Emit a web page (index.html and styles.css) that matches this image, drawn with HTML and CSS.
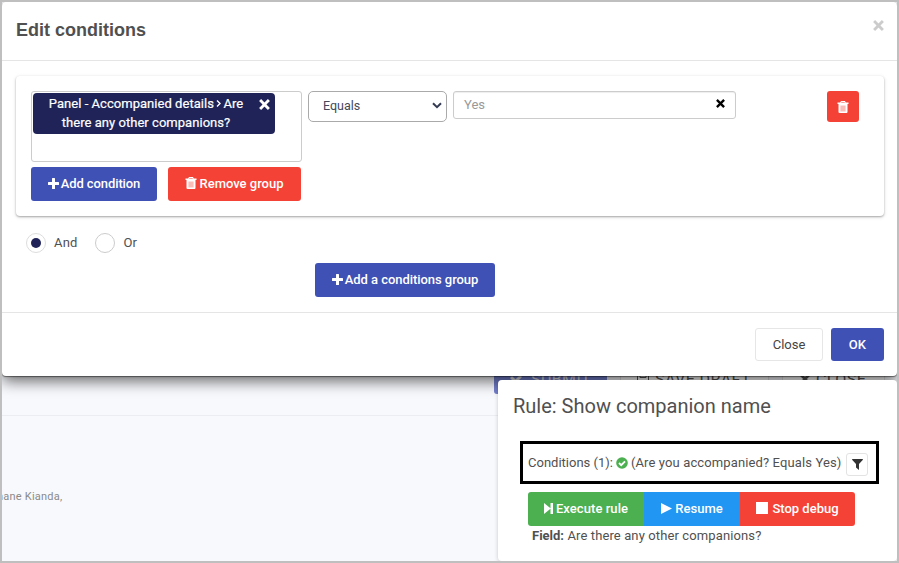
FILE: index.html
```
<!DOCTYPE html>
<html lang="en">
<head>
<meta charset="utf-8">
<title>Edit conditions</title>
<link rel="stylesheet" href="styles.css">
</head>
<body>
<svg class="defs" width="0" height="0">
  <symbol id="trash" viewBox="0 0 12 12"><path fill="currentColor" fill-opacity=".65" d="M2 3h8v8H2z"/><path fill="currentColor" fill-rule="evenodd" d="M4 0h4l.8 1.500H11.500V3H.5V1.500h2.700zM4.400.9 4.100 1.500h3.800L7.600.9zM1.500 3h9V11q0 1-1 1h-7q-1 0-1-1zM3.400 4.500v6h5.200v-6z"/></symbol>
  <symbol id="plus" viewBox="0 0 11 11"><path fill="currentColor" d="M4.600 0h1.800q.6 0 .6.6V4h3.400q.6 0 .6.6v1.800q0 .6-.6.6H7v3.400q0 .6-.6.6H4.600q-.6 0-.6-.6V7H.6Q0 7 0 6.400V4.600Q0 4 .6 4H4V.6q0-.6.6-.6z"/></symbol>
  <symbol id="cross" viewBox="0 0 10 10"><path d="M1 1 9 9M9 1 1 9" stroke="currentColor" stroke-width="2.600"/></symbol>
</svg>
<div class="frame">
  <main class="page">
    <div class="toolbar">
      <div class="tool tool-submit"><svg width="12" height="10" viewBox="0 0 12 10"><path fill="none" stroke="currentColor" stroke-width="3" d="M1 3 5.500 7.500 11 2"/></svg>SUBMIT</div>
      <div class="tool tool-draft"><svg width="12" height="12" viewBox="0 0 12 12"><path fill="none" stroke="currentColor" d="M.5.5h11v11H.5zM3 .5v4h6v-4M3 11V7.500h6V11"/></svg>SAVE DRAFT</div>
      <div class="tool tool-close"><svg width="10" height="10"><use href="#cross"/></svg>CLOSE</div>
    </div>
    <p class="names"><span>hane Kianda,</span></p>
  </main>

  <aside class="rule">
    <h2>Rule: Show companion name</h2>
    <div class="rule-cond">
      <span class="cond-label">Conditions (1):</span>
      <svg class="ok-icon" width="12" height="12" viewBox="0 0 12 12"><circle cx="6" cy="6" r="5.800" fill="#4caf50"/><path d="M3 6 5.200 8.200 9 4.300" fill="none" stroke="#fff" stroke-width="1.800"/></svg>
      <span class="cond-text">(Are you accompanied? Equals Yes)</span>
      <button class="filter"><svg width="11" height="11" viewBox="0 0 11 11"><path fill="#333" d="M.3 0h10.400q.4.500 0 1L7 5v6L4 8.500V5L.3 1q-.4-.5 0-1z"/></svg></button>
    </div>
    <div class="debug">
      <button class="btn exec"><svg width="9" height="11" viewBox="0 0 9 11"><path fill="currentColor" d="M0 0 6.500 5.200V0H9v11H6.500V5.800L0 11z"/></svg><span>Execute rule</span></button>
      <button class="btn resume"><svg width="11" height="11" viewBox="0 0 11 11"><path fill="currentColor" d="M0 0 11 5.500 0 11z"/></svg><span>Resume</span></button>
      <button class="btn stop"><i class="square"></i><span>Stop debug</span></button>
    </div>
    <p class="field"><b>Field:</b> <span>Are there any other companions?</span></p>
  </aside>

  <section class="modal">
    <header class="modal-head"><h1>Edit conditions</h1><button class="x"><svg width="11" height="11" viewBox="0 0 10 10"><use href="#cross"/></svg></button></header>
    <div class="modal-body">
      <div class="group">
        <div class="row">
          <div class="multi"><div class="tag"><span class="tag-text">Panel - Accompanied details <svg class="chevron" width="5" height="7" viewBox="0 0 5 7"><path d="M1 .5 4 3.500 1 6.500" fill="none" stroke="#fff" stroke-width="1.400"/></svg> Are<br>there any other companions?</span><svg width="11" height="11" viewBox="0 0 10 10"><use href="#cross"/></svg></div></div>
          <div class="select"><span>Equals</span><svg width="10" height="7" viewBox="0 0 10 7"><path d="M1 1.200 5 5.200 9 1.200" fill="none" stroke="#343a52" stroke-width="2"/></svg></div>
          <div class="input"><span>Yes</span><svg width="9" height="9" viewBox="0 0 10 10"><use href="#cross"/></svg></div>
          <button class="btn del"><svg width="12" height="12"><use href="#trash"/></svg></button>
        </div>
        <div class="actions">
          <button class="btn add"><svg width="11" height="11"><use href="#plus"/></svg><span>Add condition</span></button>
          <button class="btn remove"><svg width="12" height="12"><use href="#trash"/></svg><span>Remove group</span></button>
        </div>
      </div>
      <div class="radios">
        <label><i class="radio on"></i><span>And</span></label>
        <label><i class="radio"></i><span>Or</span></label>
      </div>
      <button class="btn add-group"><svg width="11" height="11"><use href="#plus"/></svg><span>Add a conditions group</span></button>
    </div>
    <footer class="modal-foot"><button class="btn close">Close</button><button class="btn ok">OK</button></footer>
  </section>
</div>
</body>
</html>
```
FILE: styles.css
```
* { box-sizing: border-box; }
body { margin: 0; font: 13px/19px Roboto, "Liberation Sans", sans-serif; color: #505050; }
.defs { position: absolute; }
svg { display: block; flex: none; }
h1, h2, p { margin: 0; }
button { font: inherit; margin: 0; padding: 0; border: 0; background: none; color: inherit; }
span, b { white-space: nowrap; }

.frame { position: relative; width: 899px; height: 563px; border: 2px solid #bfbfbf; overflow: hidden; background: #bfbfbf; }
.page { height: 559px; background: #f8f9fd; padding-top: 358px; }
.toolbar { height: 56px; display: flex; gap: 13px; padding-left: 492px; border-bottom: 1px solid #ebedf2; }
.tool { height: 34px; display: flex; align-items: center; gap: 9px; padding-top: 4px; font-size: 16px; letter-spacing: .4px; background: #fff; border: 1px solid #e4e4e4; color: #555; white-space: nowrap; }
.tool-submit { width: 113px; padding-left: 16px; background: #7480cf; border: 0; border-radius: 3px; color: #e4e4e4; }
.tool-draft { width: 149px; padding-left: 16px; gap: 6px; }
.tool-close { width: 103px; padding-left: 17px; gap: 6px; }
.names { padding-top: 71px; font-size: 11px; color: #8a8a8a; }
.names span { display: block; margin-left: -5px; letter-spacing: .22px; }

.modal { position: absolute; left: 0; top: 0; width: 895px; height: 374px; background: #fff; border-radius: 4px; box-shadow: 0 1px 1px rgba(0,0,0,.45), 0 5px 15px rgba(0,0,0,.6); z-index: 2; }
.modal-head { height: 59px; display: flex; justify-content: space-between; padding: 17px 13px 0; padding-left: 14px; border-bottom: 1px solid #e5e5e5; }
h1 { font: bold 18px/22px "Liberation Sans", sans-serif; color: #505050; }
.x { height: 11px; margin-top: 1px; color: #ccc; }
.modal-body { height: 251px; padding: 15px 13px 0 14px; display: flex; flex-direction: column; align-items: flex-start; }
.group { width: 868px; height: 140px; padding: 15px; border-radius: 4px; box-shadow: 0 1px 2px rgba(0,0,0,.28), 0 1px 4px rgba(0,0,0,.12); }
.row { display: flex; align-items: flex-start; height: 76px; gap: 6px; }
.multi { width: 271px; height: 71px; border: 1px solid #ccc; border-radius: 3px; padding: 1px; }
.tag { width: 242px; height: 41px; display: flex; background: #1f2357; border-radius: 4px; color: #fff; padding: 1px 5px 0 15px; justify-content: space-between; -webkit-text-stroke: .2px #fff; }
.tag-text { text-align: center; width: 196px; letter-spacing: .04px; }
.tag svg { margin-top: 5px; }
.tag .chevron { display: inline-block; margin: 0 -1px; vertical-align: 1px; }
.select { width: 139px; height: 31px; border: 1px solid #aaa; border-radius: 5px; display: flex; align-items: center; justify-content: space-between; padding: 0 4px 2px 14px; color: #44485a; }
.select span { font-size: 12.500px; }
.input { width: 283px; height: 28px; border: 1px solid #ccc; border-radius: 3px; display: flex; justify-content: space-between; padding: 3px 10px 0 10px; color: #999; box-shadow: inset 0 1px 1px rgba(0,0,0,.07); }
.input svg { margin-top: 4px; color: #000; }
.btn { display: flex; align-items: center; justify-content: center; gap: 2px; height: 34px; padding-bottom: 2px; border-radius: 3px; color: #fff; font-weight: 500; }
.del { width: 32px; height: 31px; margin-left: 85px; padding-bottom: 0; background: #f44336; }
.actions { display: flex; gap: 11px; }
.add { width: 126px; background: #3f51b5; }
.remove { width: 133px; background: #f44336; }
.add span { letter-spacing: -.1px; }
.radios { display: flex; margin: 17px 0 0 10px; gap: 18px; height: 20px; }
.radios label { display: flex; align-items: center; gap: 8px; }
.radios span { margin-top: -2px; letter-spacing: .15px; }
.radio { width: 20px; height: 20px; border: 1px solid #ccc; border-radius: 50%; display: flex; align-items: center; justify-content: center; }
.radio.on { border-color: #ddd; }
.radio.on::after { content: ""; width: 10px; height: 10px; border-radius: 50%; background: #1f2357; }
.add-group { width: 180px; margin: 10px 0 0 299px; background: #3f51b5; }
.add-group span { letter-spacing: -.05px; }
.modal-foot { border-top: 1px solid #e5e5e5; height: 64px; display: flex; justify-content: flex-end; gap: 8px; padding: 15px 13px; }
.close { width: 68px; height: 33px; padding: 0; border: 1px solid #e6e6e6; color: #444; font-weight: 400; }
.ok { width: 53px; height: 33px; padding: 0; background: #3f51b5; letter-spacing: .2px; }

.rule { position: absolute; left: 496px; top: 378px; width: 399px; height: 181px; background: #fff; border-radius: 4px; box-shadow: 0 1px 4px rgba(0,0,0,.2); z-index: 3; }
h2 { font: 400 20px/26px Roboto, sans-serif; padding: 13px 0 0 15px; white-space: nowrap; color: #505050; }
.rule-cond { width: 359px; height: 43px; margin: 22px 0 8px 22px; border: 3px solid #000; display: flex; align-items: center; padding-left: 5px; }
.cond-text { letter-spacing: .12px; }
.ok-icon { margin: 0 3px 0 3px; }
.filter { width: 22px; height: 23px; border: 1px solid #e3e3e3; border-radius: 3px; display: flex; align-items: center; justify-content: center; margin: 3px 0 0 5px; }
.debug { display: flex; margin-left: 30px; }
.exec { width: 116px; background: #4caf50; border-radius: 3px 0 0 3px; gap: 3px; }
.resume { width: 96px; background: #2196f3; border-radius: 0; gap: 3px; }
.stop { width: 115px; background: #f44336; border-radius: 0 3px 3px 0; gap: 4px; }
.exec span { letter-spacing: .06px; }
.square { width: 12px; height: 12px; background: #fff; }
.field { padding-left: 34px; letter-spacing: .12px; }
.field b { letter-spacing: 0; }
```
